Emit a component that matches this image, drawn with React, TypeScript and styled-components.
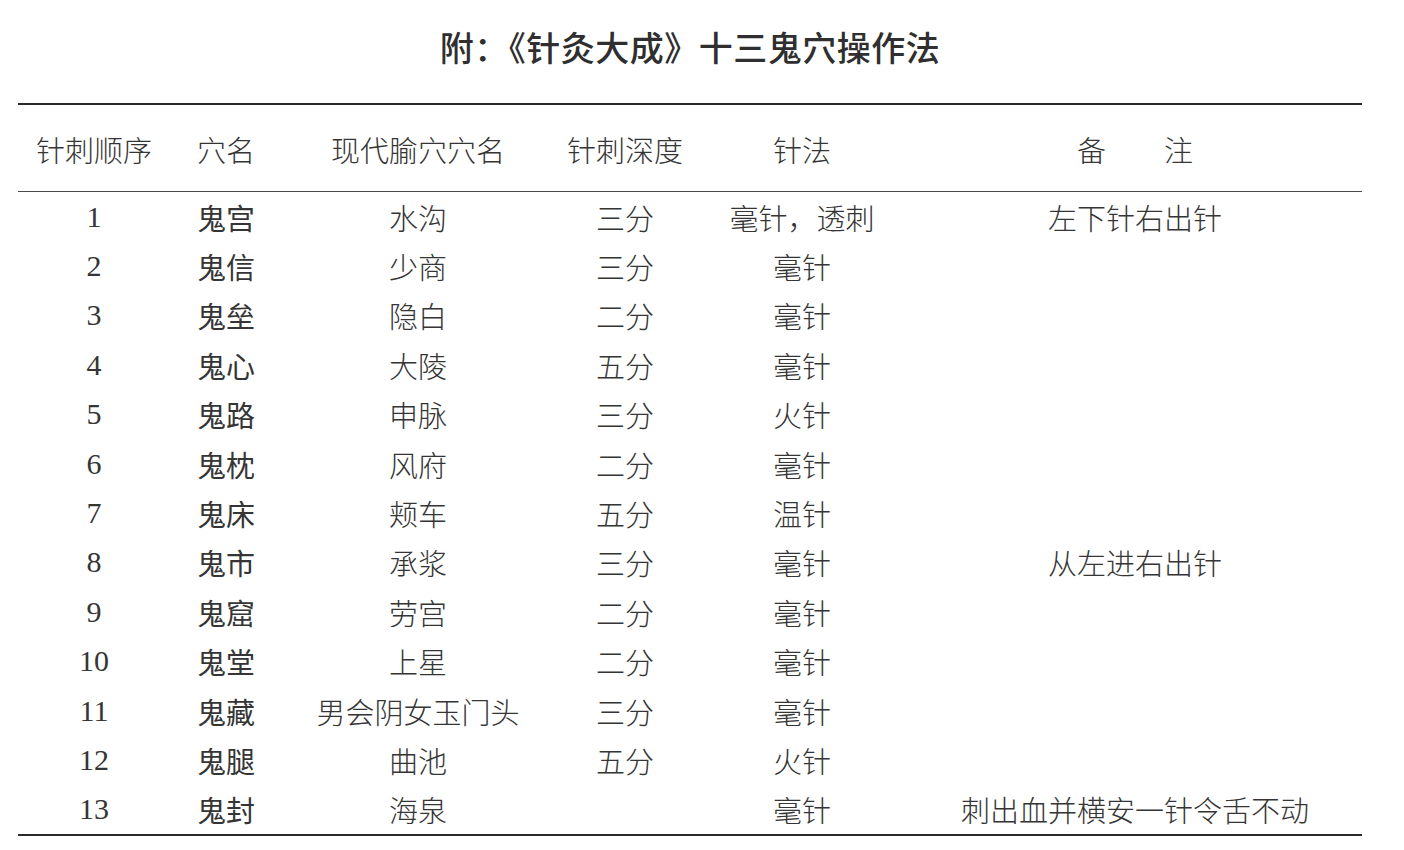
import React from "react";
import styled, { createGlobalStyle } from "styled-components";

const GlobalStyle = createGlobalStyle`
    html, body {
        margin: 0;
        padding: 0;
        background: #fff;
    }
    body {
        font-family: "Noto Sans CJK SC", "Noto Sans", sans-serif;
        color: #353535;
    }
`;

const COLUMNS = "152px 112px 272px 142px 212px 454px";

const Page = styled.div`
    width: 1344px;
    padding: 27px 0 0 18px;
`;

const Title = styled.h1`
    margin: 0 0 36px;
    height: 40px;
    line-height: 40px;
    text-align: center;
    font-size: 34px;
    font-weight: 500;
    letter-spacing: 0.5px;
    color: #2f2f2f;
`;

const Table = styled.div`
    border-top: 2px solid #2a2a2a;
    border-bottom: 2.5px solid #2a2a2a;
`;

const HeadRow = styled.div`
    display: grid;
    grid-template-columns: ${COLUMNS};
    align-items: center;
    height: 87px;
    padding-top: 2px;
    box-sizing: border-box;
    border-bottom: 1px solid #4a4a4a;
`;

const Body = styled.div`
    padding-top: 0;
`;

const Row = styled.div`
    display: grid;
    grid-template-columns: ${COLUMNS};
    align-items: center;
    height: 49.4px;
`;

const Cell = styled.div<{ $serif?: boolean }>`
    text-align: center;
    line-height: 36px;
    font-weight: 300;
    white-space: pre;
    font-family: ${(p) =>
        p.$serif
            ? `"Liberation Serif", "Noto Sans CJK SC", serif`
            : `"Noto Sans CJK SC", "Noto Sans", sans-serif`};
    font-size: ${(p) => (p.$serif ? "30px" : "29px")};
`;

const NameCell = styled(Cell)`
    font-weight: 400;
`;

const headers = ["针刺顺序", "穴名", "现代腧穴穴名", "针刺深度", "针法", "备　　注"];

const rows: [string, string, string, string, string, string][] = [
    ["1", "鬼宫", "水沟", "三分", "毫针，透刺", "左下针右出针"],
    ["2", "鬼信", "少商", "三分", "毫针", ""],
    ["3", "鬼垒", "隐白", "二分", "毫针", ""],
    ["4", "鬼心", "大陵", "五分", "毫针", ""],
    ["5", "鬼路", "申脉", "三分", "火针", ""],
    ["6", "鬼枕", "风府", "二分", "毫针", ""],
    ["7", "鬼床", "颊车", "五分", "温针", ""],
    ["8", "鬼市", "承浆", "三分", "毫针", "从左进右出针"],
    ["9", "鬼窟", "劳宫", "二分", "毫针", ""],
    ["10", "鬼堂", "上星", "二分", "毫针", ""],
    ["11", "鬼藏", "男会阴女玉门头", "三分", "毫针", ""],
    ["12", "鬼腿", "曲池", "五分", "火针", ""],
    ["13", "鬼封", "海泉", "", "毫针", "刺出血并横安一针令舌不动"],
];

const App = () => {
    return (
        <Page>
            <GlobalStyle />
            <Title>附：《针灸大成》十三鬼穴操作法</Title>
            <Table>
                <HeadRow>
                    {headers.map((h) => (
                        <Cell key={h}>{h}</Cell>
                    ))}
                </HeadRow>
                <Body>
                    {rows.map((r) => (
                        <Row key={r[0]}>
                            <Cell $serif>{r[0]}</Cell>
                            <NameCell>{r[1]}</NameCell>
                            <Cell>{r[2]}</Cell>
                            <Cell>{r[3]}</Cell>
                            <Cell>{r[4]}</Cell>
                            <Cell>{r[5]}</Cell>
                        </Row>
                    ))}
                </Body>
            </Table>
        </Page>
    );
};

export default App;
